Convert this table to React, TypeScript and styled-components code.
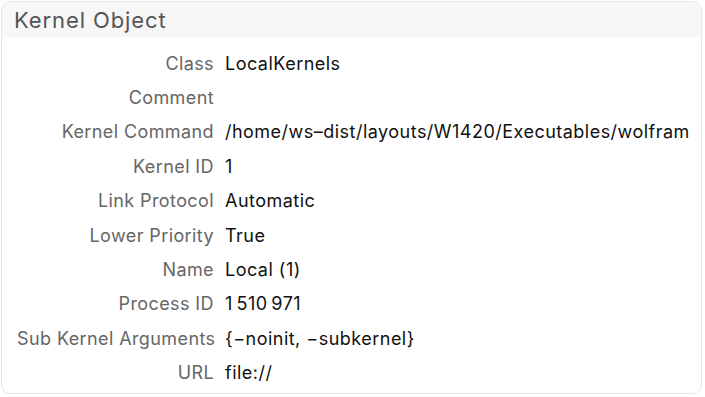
import React from "react";
import styled, { createGlobalStyle } from "styled-components";

const GlobalStyle = createGlobalStyle`
  html, body {
    margin: 0;
    padding: 0;
    background: #ffffff;
  }
  body {
    font-family: Inter, "Liberation Sans", sans-serif;
  }
`;

const Page = styled.div`
  padding: 1px 3px 3px 1px;
  width: 705px;
  height: 397px;
  box-sizing: border-box;
`;

const Card = styled.div`
  border: 1px solid #e6e6e6;
  border-radius: 9px;
  overflow: hidden;
  height: 100%;
  box-sizing: border-box;
  background: #ffffff;
`;

const Header = styled.div`
  background: #f7f7f7;
  height: 35px;
  display: flex;
  align-items: center;
  padding-left: 12px;
  font-size: 22px;
  letter-spacing: 0.9px;
  color: #555555;
`;

const Grid = styled.div`
  display: grid;
  grid-template-columns: 197px auto;
  column-gap: 11px;
  grid-auto-rows: 34.4px;
  padding: 9px 0 0 15px;
  align-items: center;
  font-size: 18px;
  letter-spacing: 0.4px;
`;

const Label = styled.div`
  text-align: right;
  color: #666666;
  white-space: nowrap;
`;

const Value = styled.div`
  color: #111111;
  white-space: nowrap;
  letter-spacing: 0.48px;
`;

const rows: [string, string][] = [
  ["Class", "LocalKernels"],
  ["Comment", ""],
  ["Kernel Command", "/home/ws\u2013dist/layouts/W1420/Executables/wolfram"],
  ["Kernel ID", "1"],
  ["Link Protocol", "Automatic"],
  ["Lower Priority", "True"],
  ["Name", "Local (1)"],
  ["Process ID", "1\u2009510\u2009971"],
  ["Sub Kernel Arguments", "{\u2212noinit, \u2212subkernel}"],
  ["URL", "file://"],
];

export default function App() {
  return (
    <Page>
      <GlobalStyle />
      <Card>
        <Header>Kernel Object</Header>
        <Grid>
          {rows.map(([label, value]) => (
            <React.Fragment key={label}>
              <Label>{label}</Label>
              <Value>{value}</Value>
            </React.Fragment>
          ))}
        </Grid>
      </Card>
    </Page>
  );
}
